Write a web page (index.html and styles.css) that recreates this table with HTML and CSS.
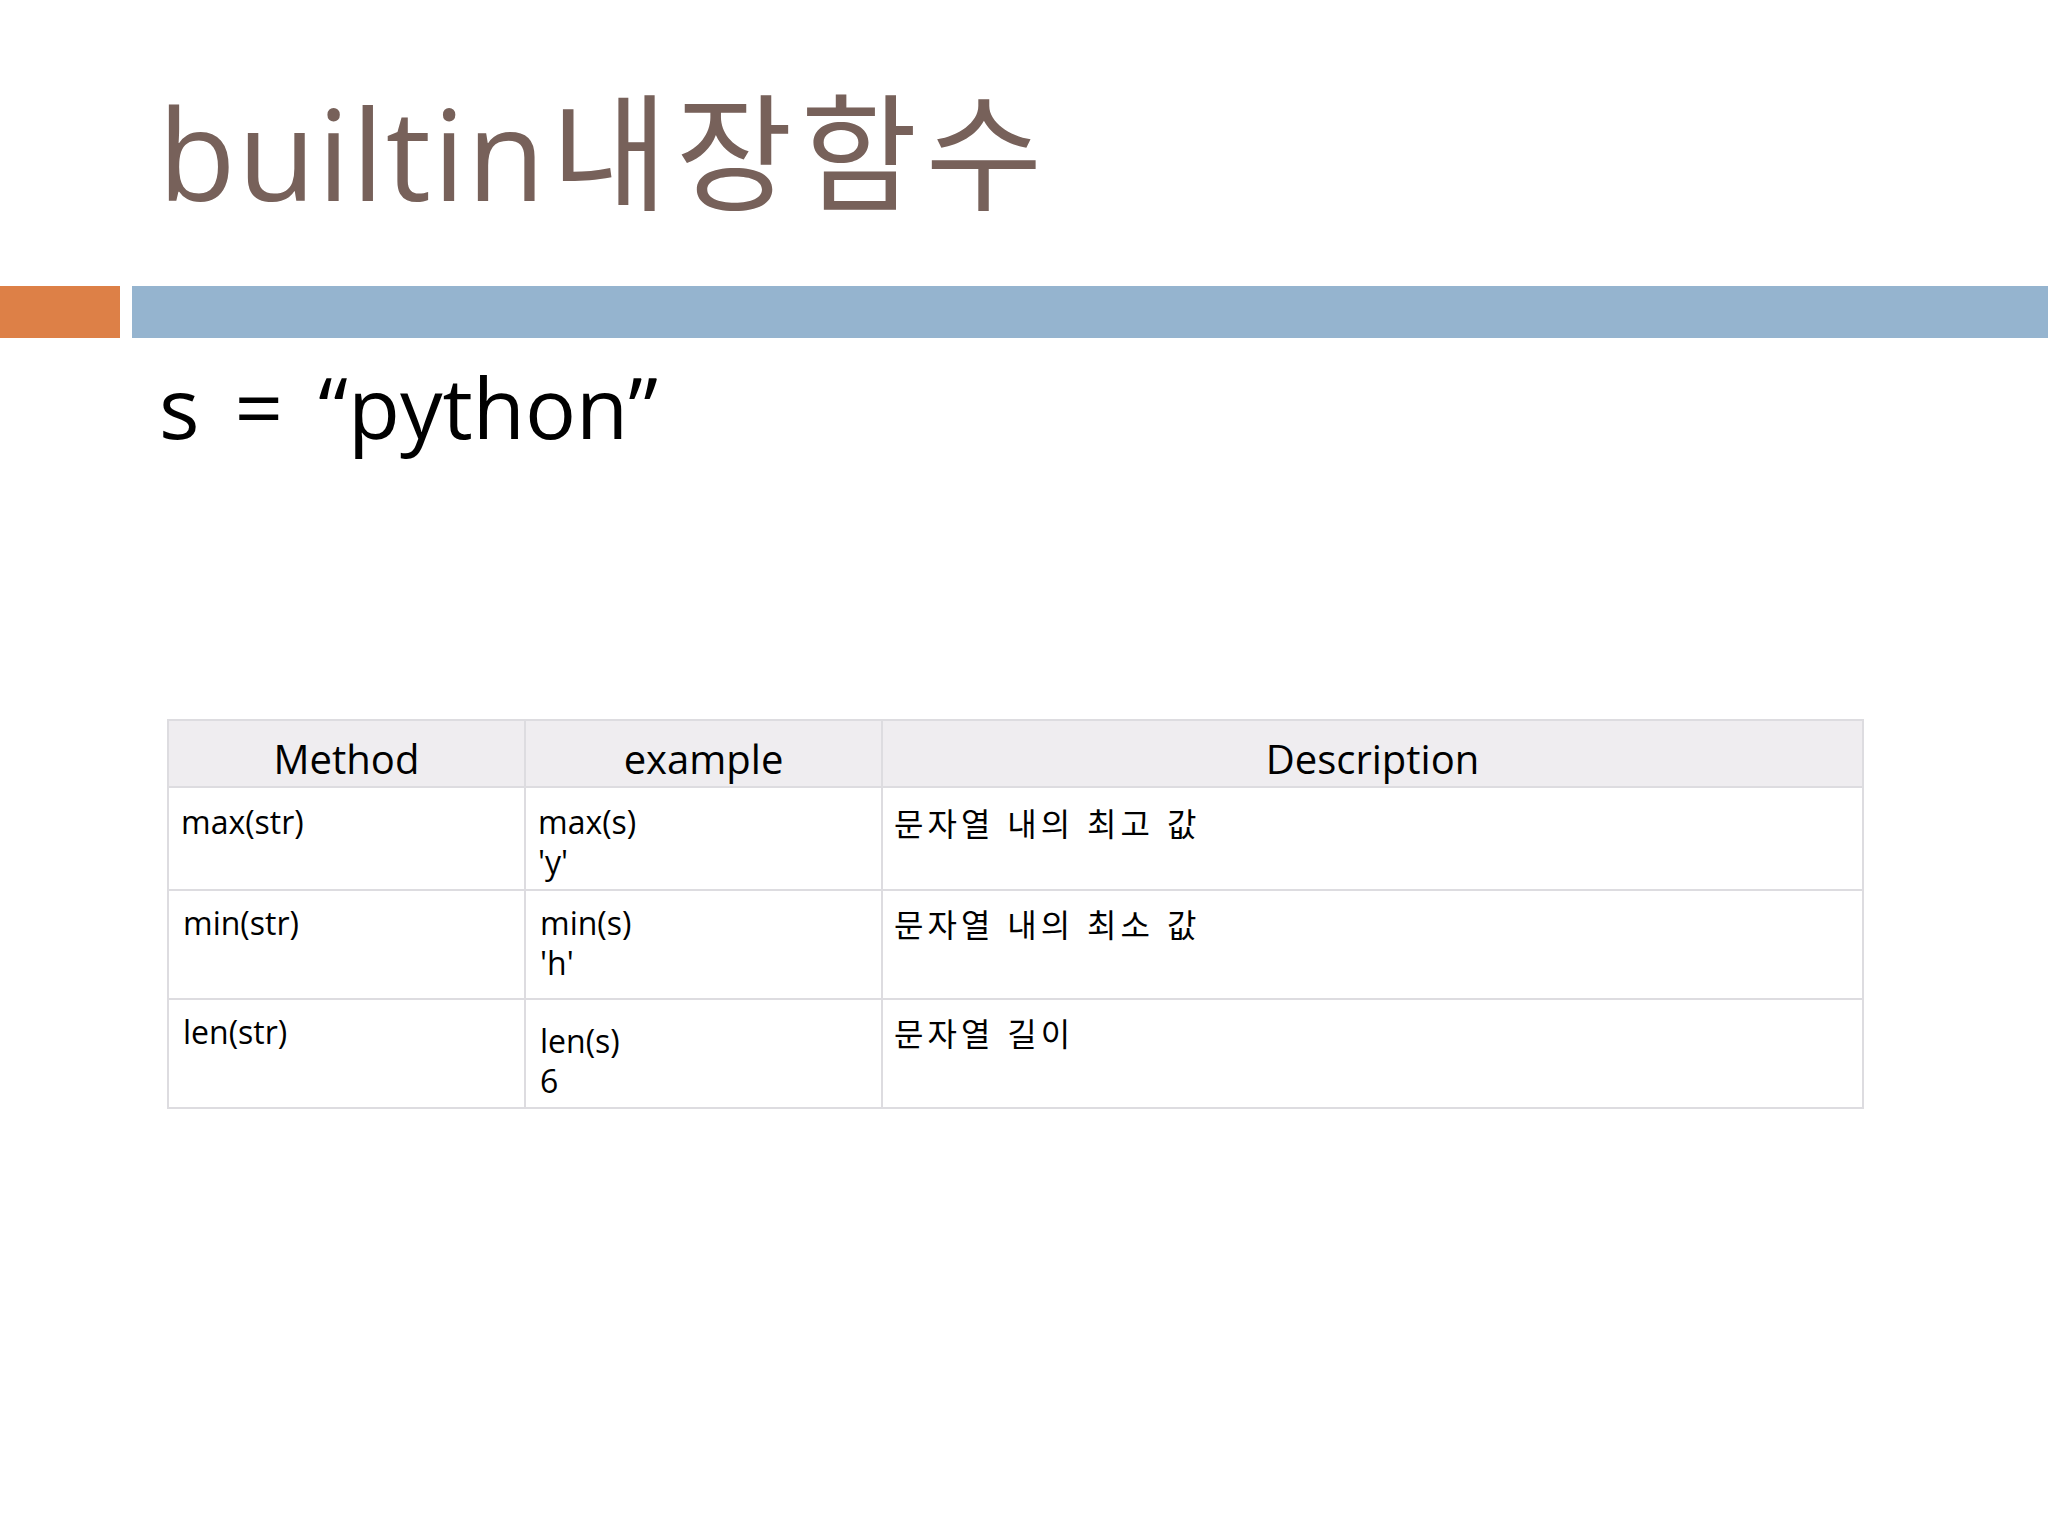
FILE: index.html
```html
<!DOCTYPE html>
<html lang="ko">
<head>
<meta charset="utf-8">
<title>builtin내장함수</title>
<link rel="stylesheet" href="styles.css">
</head>
<body>
<div class="slide">
  <h1 class="title">builtin<span class="title-ko">내장함수</span></h1>
  <div class="bars">
    <div class="bar-orange"></div>
    <div class="bar-blue"></div>
  </div>
  <p class="code">s = “python”</p>
  <table class="methods">
    <colgroup>
      <col class="c1">
      <col class="c2">
      <col class="c3">
    </colgroup>
    <thead>
      <tr class="head">
        <th>Method</th>
        <th>example</th>
        <th>Description</th>
      </tr>
    </thead>
    <tbody>
      <tr class="r1">
        <td class="tight">max(str)</td>
        <td class="tight">max(s)<br>'y'</td>
        <td class="ko tight">문자열 내의 최고 값</td>
      </tr>
      <tr class="r2">
        <td class="shift">min(str)</td>
        <td class="shift">min(s)<br>'h'</td>
        <td class="ko">문자열 내의 최소 값</td>
      </tr>
      <tr class="r3">
        <td class="shift">len(str)</td>
        <td class="shift low">len(s)<br>6</td>
        <td class="ko">문자열 길이</td>
      </tr>
    </tbody>
  </table>
</div>
</body>
</html>
```
FILE: styles.css
```css
html, body {
  margin: 0;
  padding: 0;
  background: #ffffff;
}

body {
  font-family: "Open Sans", "Noto Sans CJK KR", sans-serif;
  color: #000;
}

.slide {
  width: 2048px;
  height: 1536px;
  padding-top: 83px;
  box-sizing: border-box;
  display: flex;
  flex-direction: column;
}

.title {
  margin: 0 0 76px 0;
  padding-left: 158px;
  font-size: 127px;
  line-height: 127px;
  height: 127px;
  font-weight: 400;
  color: #77615a;
  white-space: nowrap;
  letter-spacing: 2px;
}

.title-ko {
  font-family: "Noto Sans CJK KR", sans-serif;
  letter-spacing: 8px;
  margin-left: 4px;
}

.bars {
  display: flex;
  gap: 12px;
  height: 52px;
}

.bar-orange {
  width: 120px;
  background: #dd8047;
}

.bar-blue {
  flex: 1;
  background: #95b4cf;
}

.code {
  margin: 24px 0 0 0;
  padding-left: 159px;
  font-size: 85px;
  line-height: 88px;
  height: 88px;
  white-space: nowrap;
  word-spacing: 13px;
}

.methods {
  margin: 269px 0 0 167px;
  width: 1697px;
  border-collapse: collapse;
  table-layout: fixed;
}

.c1, .c2 { width: 357px; }

.methods th,
.methods td {
  border: 2px solid #dddce0;
  padding: 0;
}

.head th {
  height: 67px;
  background: #efedf0;
  font-size: 40px;
  font-weight: 400;
  line-height: 44px;
  padding-top: 10px;
  text-align: center;
  vertical-align: middle;
  box-sizing: border-box;
}

.methods td {
  vertical-align: top;
  text-align: left;
  font-size: 32px;
  line-height: 40px;
  padding: 12px 12px 0 12px;
  box-sizing: border-box;
}

.methods td.ko {
  font-family: "Noto Sans CJK KR", sans-serif;
  padding-left: 11px;
  line-height: 40px;
  letter-spacing: 4px;
  word-spacing: 0;
}

.methods td.tight { padding-top: 14px; }
.methods td.shift { padding-left: 14px; }
.methods td.low { padding-top: 21px; }

.r1 { height: 103px; }
.r2 { height: 109px; }
.r3 { height: 109px; }
```
